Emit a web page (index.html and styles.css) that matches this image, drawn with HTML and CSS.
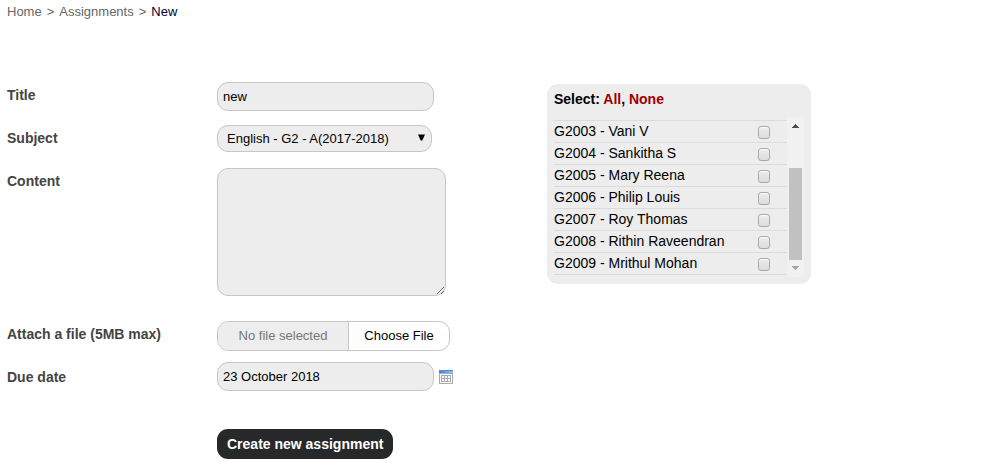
FILE: index.html
```html
<!DOCTYPE html>
<html lang="en">
<head>
<meta charset="utf-8">
<title>New assignment</title>
<link rel="stylesheet" href="styles.css">
</head>
<body>
<nav class="breadcrumb" aria-label="Breadcrumb">
  <a href="#">Home</a><span>&gt;</span><a href="#">Assignments</a><span>&gt;</span><a class="current" href="#">New</a>
</nav>
<form class="page">
  <div class="fields">
    <div class="row">
      <label for="title">Title</label>
      <input class="text" id="title" type="text" value="new">
    </div>
    <div class="row">
      <label for="subject">Subject</label>
      <div class="select-wrap">
        <select id="subject"><option>English - G2 - A(2017-2018)</option></select>
        <svg class="caret" width="7" height="7" viewBox="0 0 7 7" aria-hidden="true"><path d="M0 0.5h7L4.3 6.5H2.7z"/></svg>
      </div>
    </div>
    <div class="row row-content">
      <label for="content">Content</label>
      <textarea id="content"></textarea>
    </div>
    <div class="row row-file">
      <label for="file">Attach a file (5MB max)</label>
      <label class="uploader" for="file">
        <input id="file" type="file">
        <span class="filename">No file selected</span>
        <span class="action">Choose File</span>
      </label>
    </div>
    <div class="row row-date">
      <label for="due">Due date</label>
      <div class="date">
        <input class="text" id="due" type="text" value="23 October 2018">
        <button class="calendar" type="button" aria-label="Pick a date">
          <svg width="14" height="14" viewBox="0 0 14 14" shape-rendering="crispEdges">
            <defs><linearGradient id="bar"><stop offset="0" stop-color="#3b86d8"/><stop offset="1" stop-color="#8fc2f4"/></linearGradient></defs>
            <path fill="#a9a9a9" d="M0 3h14v11H0z"/>
            <path fill="#fff" d="M1 4h12v9H1z"/>
            <path fill="url(#bar)" d="M0 0h14v3H0z"/>
            <path fill="#4a8cd8" d="M0 0h14v1H0z"/>
            <path fill="#a9a9a9" d="M2 5h10v7H2z"/>
            <path fill="#fff" d="M3 6h2v2H3zM6 6h2v2H6zM9 6h2v2H9zM3 9h2v2H3zM6 9h2v2H6zM9 9h2v2H9z"/>
          </svg>
        </button>
      </div>
    </div>
    <div class="row row-submit">
      <button class="submit" type="submit">Create new assignment</button>
    </div>
  </div>
  <section class="students">
    <div class="select-links">Select: <a href="#">All</a>, <a href="#">None</a></div>
    <div class="list-frame">
      <ul>
        <li><label for="s3">G2003 - Vani V</label><input id="s3" type="checkbox"></li>
        <li><label for="s4">G2004 - Sankitha S</label><input id="s4" type="checkbox"></li>
        <li><label for="s5">G2005 - Mary Reena</label><input id="s5" type="checkbox"></li>
        <li><label for="s6">G2006 - Philip Louis</label><input id="s6" type="checkbox"></li>
        <li><label for="s7">G2007 - Roy Thomas</label><input id="s7" type="checkbox"></li>
        <li><label for="s8">G2008 - Rithin Raveendran</label><input id="s8" type="checkbox"></li>
        <li><label for="s9">G2009 - Mrithul Mohan</label><input id="s9" type="checkbox"></li>
      </ul>
      <div class="scrollbar" aria-hidden="true">
        <svg width="7" height="4" viewBox="0 0 7 4" shape-rendering="crispEdges"><path fill="#505050" d="M3 0h1v1h1v1h1v1h1v1H0V3h1V2h1V1h1z"/></svg>
        <div class="thumb"></div>
        <svg width="7" height="4" viewBox="0 0 7 4" shape-rendering="crispEdges"><path fill="#a3a3a3" d="M0 0h7v1H6v1H5v1H4v1H3V3H2V2H1V1H0z"/></svg>
      </div>
    </div>
  </section>
</form>
</body>
</html>
```
FILE: styles.css
```css
* { box-sizing: border-box; }

body {
  margin: 0;
  padding: 4px 7px 0;
  background: #fff;
  color: #000;
  font: 14px/16px "Liberation Sans", Arial, sans-serif;
}

input, select, textarea, button { margin: 0; font: inherit; color: inherit; }
a { text-decoration: none; }

.breadcrumb { display: flex; gap: 5px; font-size: 13px; color: #666; }
.breadcrumb a { color: #666; }
.breadcrumb .current { color: #003; }

.page { display: flex; align-items: flex-start; margin-top: 62px; }
.fields { flex: 0 0 540px; }

.row {
  display: grid;
  grid-template-columns: 210px 1fr;
  align-items: start;
  justify-items: start;
  margin-bottom: 14px;
}
.row > label:first-child { padding-top: 5px; font-weight: bold; color: #444; }
.row-content { margin-top: 16px; margin-bottom: 25px; }
.row-file { margin-bottom: 11px; }
.row-date { align-items: center; }
.row-date > label:first-child { padding-top: 0; }
.row-submit { margin: 38px 0 0; }

.text, select, textarea {
  background: #ededed;
  border: 1px solid #c6c6c6;
  border-radius: 11px;
  font-size: 13px;
}
.text { width: 217px; height: 29px; padding: 0 5px; }

.select-wrap { position: relative; }
select { display: block; appearance: none; width: 215px; height: 27px; padding: 0 9px; }
.caret { position: absolute; top: 9px; right: 7px; pointer-events: none; }

textarea { display: block; width: 229px; height: 128px; padding: 5px; }

.uploader {
  display: flex;
  width: 233px;
  height: 30px;
  overflow: hidden;
  position: relative;
  border: 1px solid #c6c6c6;
  border-radius: 11px;
  font-size: 13px;
  line-height: 28px;
  text-align: center;
}
.uploader input { position: absolute; opacity: 0; width: 100%; height: 100%; }
.filename { flex: 1; background: #ededed; color: #777; border-right: 1px solid #c6c6c6; }
.action { width: 100px; }

.date { display: flex; align-items: center; gap: 5px; }
.calendar { padding: 0; border: 0; background: none; line-height: 0; cursor: pointer; }

.submit {
  grid-column: 2;
  height: 30px;
  padding: 0 10px;
  border: 0;
  border-radius: 11px;
  background: #272829;
  color: #fff;
  font-weight: bold;
}

.students {
  width: 264px;
  margin-top: 2px;
  padding: 7px;
  background: #ededed;
  border-radius: 11px;
}
.select-links { font-weight: bold; padding-bottom: 10px; }
.select-links a { color: #a00000; }

.list-frame { display: flex; }
ul { flex: 1; margin: 0; padding: 3px 0 2px; list-style: none; }
li {
  display: flex;
  align-items: flex-start;
  justify-content: space-between;
  height: 22px;
  padding: 2px 17px 0 0;
  border-top: 1px solid #dcdcdc;
}
li:last-child { height: 23px; border-bottom: 1px solid #dcdcdc; }
li input {
  appearance: none;
  width: 12px;
  height: 13px;
  margin-top: 3px;
  border: 1px solid #a8a8a8;
  border-radius: 3px;
  background: linear-gradient(#ececec, #dcdcdc);
  box-shadow: inset 0 1px 1px #fff;
}

.scrollbar {
  display: flex;
  flex-direction: column;
  align-items: center;
  width: 17px;
  padding: 7px 2px;
  background: #f1f1f1;
}
.thumb { width: 13px; height: 92px; margin: auto 0 6px; background: #c1c1c1; }
```
